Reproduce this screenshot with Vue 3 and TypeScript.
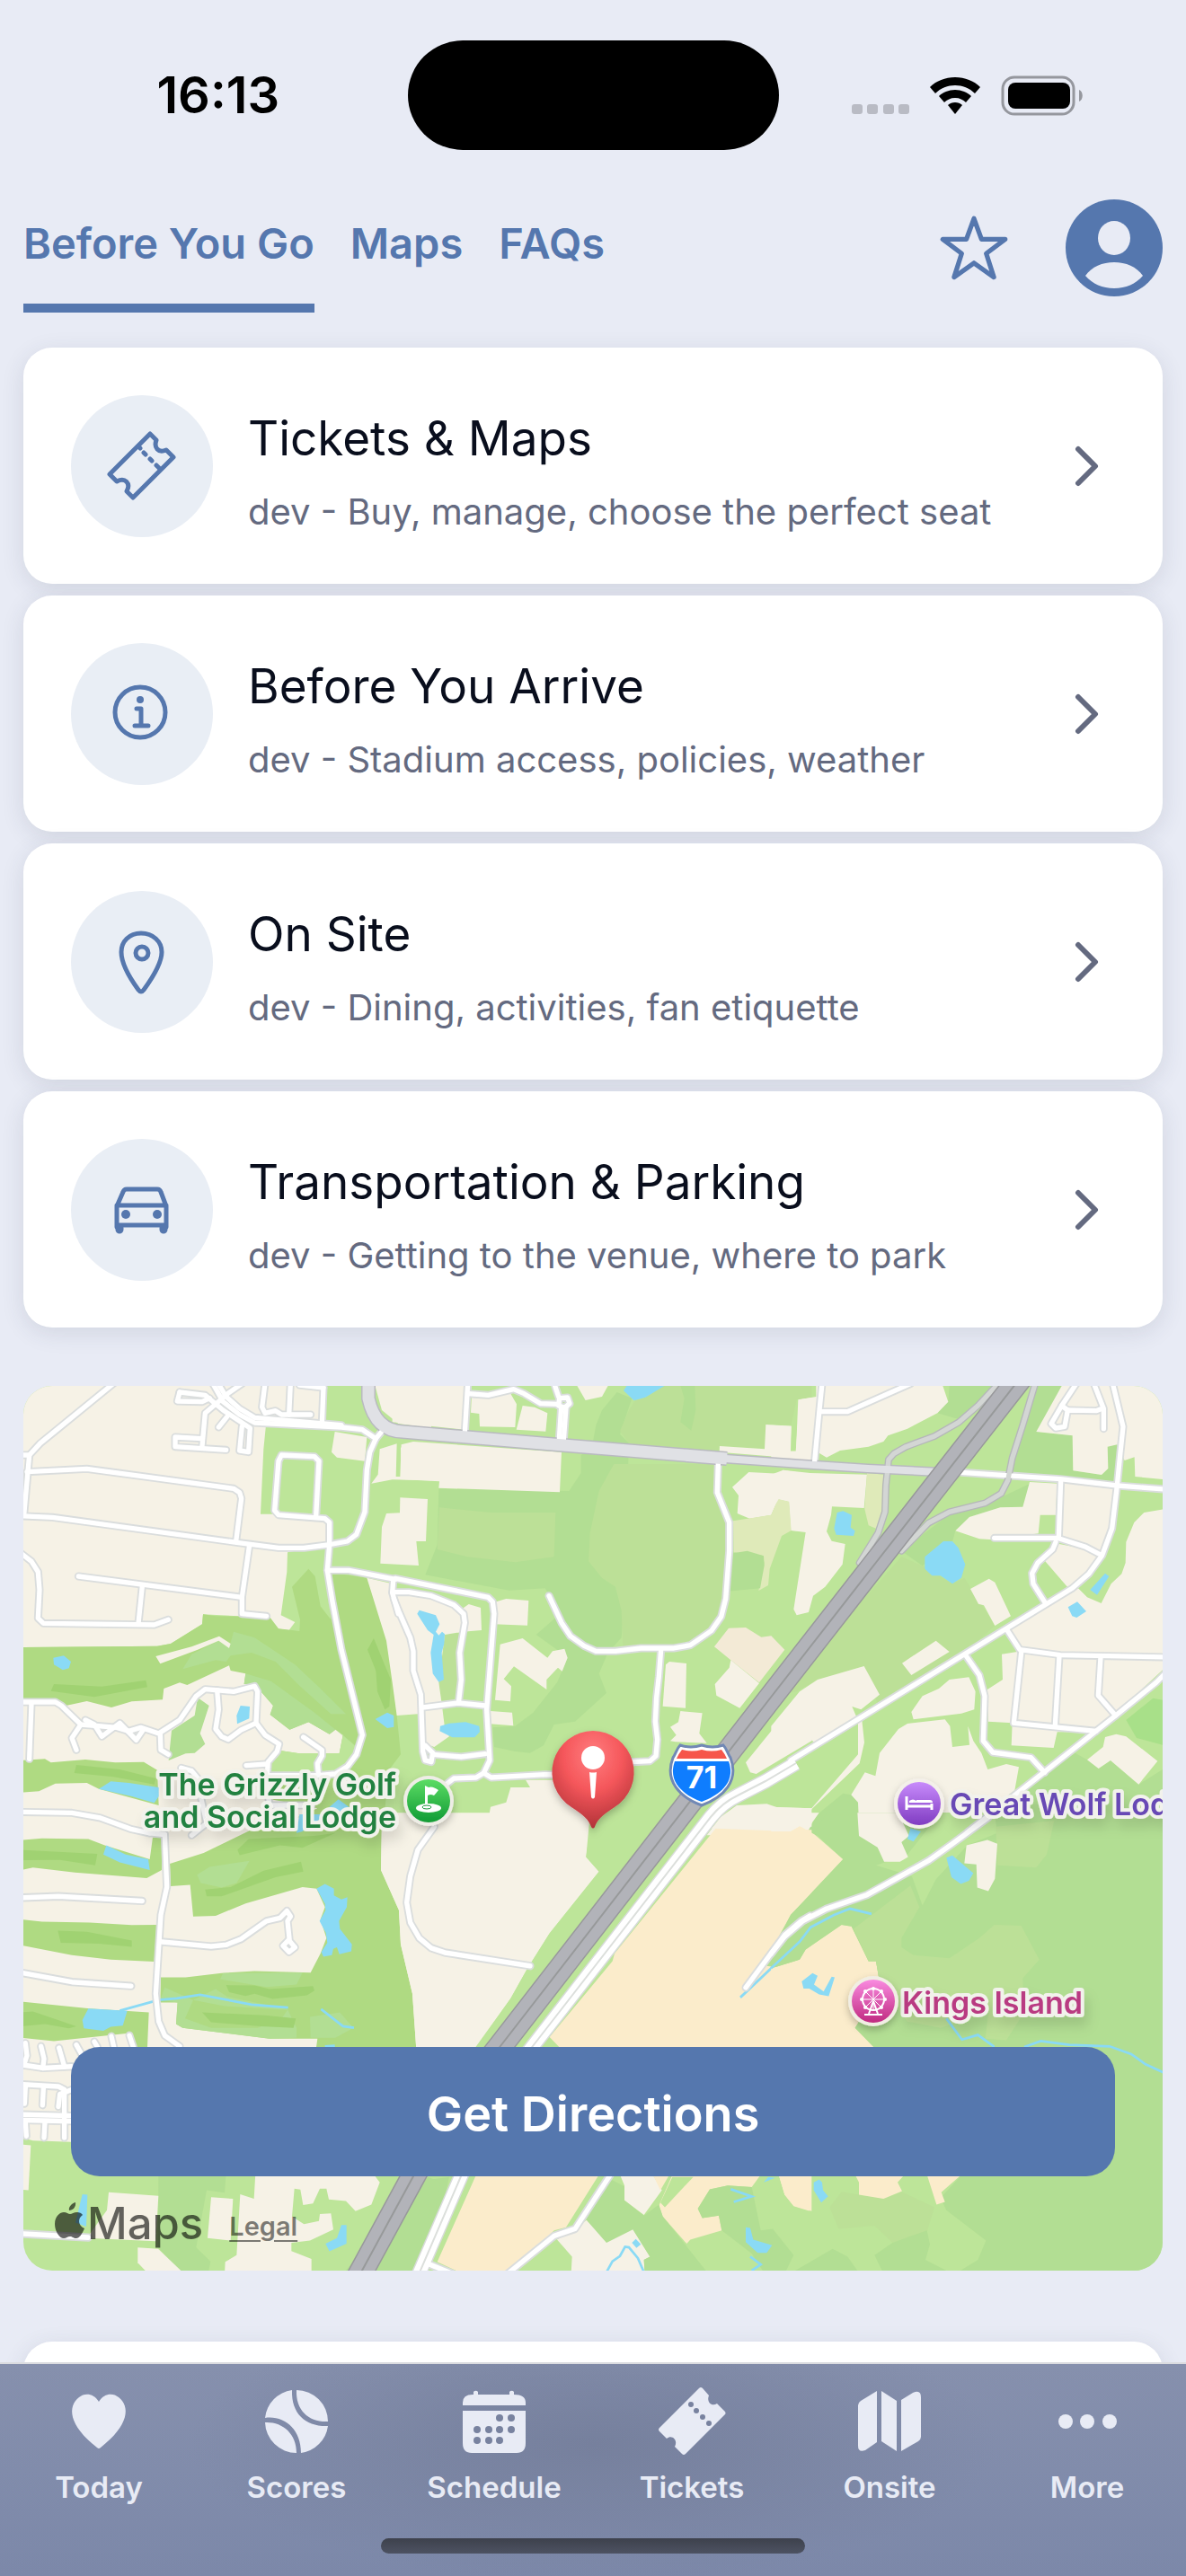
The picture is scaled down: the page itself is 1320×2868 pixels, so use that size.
<script setup lang="ts">
import { ref } from 'vue'

type Shape = [kind: string, points: string]

interface Tile {
  id: string
  transform: string
  areas: Shape[]
  streams: string[]
  ramps: string[]
  roads: string[]
}

const tabs = ['Before You Go', 'Maps', 'FAQs']
const activeTab = ref('Before You Go')

const guides = [
  { icon: 'ticket', title: 'Tickets & Maps', text: 'dev - Buy, manage, choose the perfect seat' },
  { icon: 'info', title: 'Before You Arrive', text: 'dev - Stadium access, policies, weather' },
  { icon: 'pin', title: 'On Site', text: 'dev - Dining, activities, fan etiquette' },
  { icon: 'car', title: 'Transportation & Parking', text: 'dev - Getting to the venue, where to park' },
]

const navItems = ['Today', 'Scores', 'Schedule', 'Tickets', 'Onsite', 'More']

// The map is drawn in six tiles, each with its own coordinate grid.
const tiles: Tile[] = [
  {
    id: 'nw',
    transform: 'translate(-26 -23) scale(.33333)',
    areas: [
      ['cream', '70,60 1085,60 1080,195 888,200 880,280 870,497 915,497 1090,515 1100,600 960,625 958,690 938,835 985,858 965,885 925,880 900,850 800,838 678,832 675,865 570,930 525,938 70,942'],
      ['golf', '70,942 525,938 570,930 675,865 678,832 720,838 900,840 930,880 1000,888 1002,850 975,740 1030,680 1052,705 1070,805 1105,850 1090,690 1225,710 1295,920 1312,1060 1325,1170 1338,1300 1300,1350 1275,1570 70,1570'],
      ['cream', '70,1115 180,1115 220,1137 290,1122 372,1143 440,1123 543,1117 547,1080 600,1060 625,1068 765,1003 770,1020 820,1030 815,1065 850,1065 912,1137 902,1167 967,1217 1030,1192 1100,1232 1120,1217 1145,1235 1133,1297 1000,1297 935,1287 900,1330 905,1450 1060,1480 860,1570 70,1570'],
      ['green', '935,1287 1000,1297 1133,1297 1145,1235 1185,1270 1210,1280 1160,1340 1060,1380 905,1385 900,1330'],
      ['golf', '70,1320 150,1315 170,1327 285,1317 385,1327 480,1325 525,1352 530,1470 330,1415 290,1395 185,1397 130,1423 70,1427'],
      ['dark', '255,1335 400,1350 520,1380 515,1400 380,1375 248,1362'],
      ['dark', '180,1065 340,1073 487,1052 492,1075 315,1108 170,1088'],
      ['dark', '1248,912 1280,990 1305,1050 1300,1140 1285,1150 1260,1090 1255,1020 1227,950'],
      ['forest', '610,1015 640,965 730,920 765,945 780,890 850,910 985,1000 1070,1080 1155,1165 1105,1165 1000,1070 920,990 840,960 770,970 755,990 720,985'],
      ['forest', '820,1030 905,1055 1050,1160 1185,1270 1145,1235 1120,1217 1100,1232 1030,1192 967,1217 902,1167 912,1137 850,1065 815,1065'],
      ['forest', '660,1110 698,1137 668,1230 685,1265 650,1295 620,1297 563,1320 573,1220 650,1170'],
      ['cream', '520,972 640,940 732,905 770,930 765,945 730,920 660,950 535,997'],
      ['cream', '1118,222 1225,240 1218,320 1125,308 1107,290'],
      ['cream', '1240,395 1262,365 1268,280 1325,262 1322,372 1340,372 1338,275 1390,262 1440,265 1440,385 1310,382'],
      ['cream', '1250,60 1440,60 1440,210 1330,195 1275,150'],
      ['water', '178,977 213,970 237,990 230,1012 210,1018 180,1000'],
      ['water', '803,1137 834,1140 832,1180 792,1198 790,1170'],
      ['water', '1253,1182 1293,1160 1315,1170 1315,1208 1293,1212'],
      ['water', '330,1415 370,1390 430,1395 530,1410 530,1440 515,1462 440,1440'],
      ['water', '1060,1510 1130,1450 1165,1475 1000,1560 990,1560'],
    ],
    streams: [],
    ramps: [],
    roads: [
      '380,60 135,260 98,300 80,500', '60,300 98,300', '90,356 290,346 780,412 800,425 806,445 788,588',
      '60,503 175,508 790,592 930,610 1015,610 1095,600 1160,588 1190,565 1218,490 1225,350 1235,290 1255,245 1280,215',
      '1255,245 1210,215 1140,207 850,192 800,165 745,122 710,60', '1140,200 850,175 800,145 755,105 728,60',
      '600,90 685,100 745,150 835,210 830,290 800,285 808,205', '600,90 592,120 675,122 700,110',
      '675,270 685,160 720,130 760,95 810,60', '755,283 585,272 585,240 675,245', '730,207 758,172',
      '885,60 875,140 885,160 920,152 940,165 1037,165', '970,60 965,165', '1080,75 1075,195', '1000,66 1080,75',
      '1055,505 1065,320 1050,305 940,300 930,320 917,485 930,500 1085,512 1100,525 1100,600 1093,685 1110,790 1140,950 1210,1235 1190,1300 1160,1340 1120,1365 1060,1370 900,1370',
      '1093,685 1165,685 1320,715', '262,705 808,775', '833,600 808,775 808,830 890,838', '475,738 462,862',
      '60,620 105,655 127,690 132,750 127,845 145,862 515,867 562,850',
      '60,1125 185,1125 205,1137 270,1200 390,1210 430,1222 470,1210 530,1230 600,1185 655,1105 685,1082 780,1090 850,1072 860,1090 855,1195 885,1235 932,1265 925,1290 895,1325 890,1400 900,1470 1040,1470',
      '105,1130 98,1315', '270,1200 240,1245 255,1285', '285,1185 315,1200 340,1240 400,1195 455,1252 480,1215',
      '535,1230 537,1285 562,1300', '725,1085 730,1150 720,1215 740,1240 762,1250 805,1218 855,1195',
      '1013,1242 1075,1285 1075,1305 1060,1330 1063,1365', '822,1337 890,1332',
      '605,1345 640,1355 665,1385 670,1440 690,1530 640,1570', '60,1492 240,1495 335,1512 440,1550 500,1563',
      '1313,720 1310,760 1330,830',
    ],
  },
  {
    id: 'n',
    transform: 'translate(414 -23) scale(.33333)',
    areas: [
      ['forest', '740,90 690,150 670,200 655,280 620,300 620,360 580,420 145,412 140,600 100,700 380,752 500,745 550,830 470,900 540,950 575,977 540,1060 460,1160 400,1205 325,1210 330,1275 400,1290 450,1295 495,1270 530,1200 600,1190 705,1095 680,1030 710,960 755,910 760,840 780,260 750,230 790,110'],
      ['olive', '147,475 320,492 535,492 530,640 400,658 240,640 140,615'],
      ['olive', '680,420 730,330 1075,330 1075,425 1115,520 1105,800 1050,890 980,935 760,940 755,820 735,740 690,710 645,655 650,560'],
      ['olive', '800,118 835,107 900,60 1390,60 1390,110 1340,115 1322,200 1237,198 1233,278 1080,270 1080,290 780,260 750,220 780,150'],
      ['forest', '952,69 1000,69 1003,150 988,218 952,190 965,110'],
      ['olive', '167,900 225,892 215,960 220,1050 212,1128 155,1130 145,1060'],
      ['cream', '-10,60 242,60 230,215 -10,190'],
      ['cream', '255,100 385,95 405,130 400,207 282,205 280,162 252,158'],
      ['cream', '425,135 465,140 508,160 502,221 404,215'],
      ['cream', '605,65 712,65 690,105 635,117'],
      ['cream', '20,265 60,255 555,290 549,424 145,410 147,388 0,380 0,372 16,372'],
      ['cream', '16,442 108,447 102,588 70,588 78,669 -50,662 -45,540 -30,495 15,493'],
      ['cream', '337,790 370,780 445,786 441,869 330,865'],
      ['cream', '350,932 425,912 508,977 525,955 565,947 575,977 557,1022 543,1010 505,1050 505,1083 396,1006 362,1048 387,1072 384,1123 333,1118'],
      ['cream', '318,1155 390,1160 394,1204 315,1198'],
      ['cream', '0,750 120,775 200,805 225,840 228,890 165,900 145,1060 155,1130 165,1210 180,1240 130,1275 90,1260 75,1165 5,1170 -10,1060 -30,920 -95,710 -10,730'],
      ['cream', '228,810 245,798 285,810 288,885 225,890'],
      ['cream', '903,1000 915,990 972,996 969,1145 893,1139'],
      ['cream', '952,1155 1025,1162 1015,1230 1040,1262 935,1258 918,1255 938,1235 918,1208 945,1192'],
      ['cream', '1125,407 1180,357 1280,362 1295,350 1390,365 1390,555 1322,552 1315,455 1278,447 1255,500 1183,512 1142,495 1146,435'],
      ['cream', '1237,198 1322,203 1318,287 1338,287 1345,115 1390,108 1390,315 1082,290 1083,270 1233,280'],
      ['peach', '1065,940 1113,878 1170,876 1222,908 1255,904 1300,950 1215,1060 1120,985'],
      ['cream', '1120,985 1215,1062 1150,1145 1072,1103 1067,1065 1115,1010'],
      ['cream', '1170,1327 1370,1080 1390,1065 1390,1255 1205,1365 1185,1360'],
      ['cream', '385,1410 450,1410 435,1385 560,1385 640,1480 660,1500 650,1570 -50,1570 -45,1500 190,1500 310,1520 318,1475 370,1460'],
      ['cream', '1085,1510 1140,1470 1240,1465 1275,1477 1390,1480 1390,1570 1040,1570'],
      ['yellow', '1278,447 1315,455 1322,552 1290,570 1250,680 1245,735 1213,753 1232,660 1225,635 1130,625 1128,520 1255,500'],
      ['forest', '1128,628 1175,620 1230,637 1232,670 1218,745 1110,755'],
      ['water', '762,85 775,65 905,65 835,107 797,118'],
      ['water', '80,818 135,835 148,865 135,890 145,902 156,890 165,898 163,930 155,960 162,1050 145,1058 125,1030 118,960 128,900 108,885 73,830'],
      ['water', '150,1205 180,1196 235,1192 280,1205 282,1225 265,1243 190,1243 148,1222'],
    ],
    streams: [],
    ramps: [],
    roads: [
      '242,60 232,225', '245,95 310,100 395,80 430,95 485,128 545,130', '530,60 545,105', '548,110 575,108 582,128 565,142 545,135 548,110',
      '554,140 547,250', '570,140 562,250',
      '1078,325 1075,425 1115,525 1115,620 1103,780 1088,840 1055,887 985,935 930,945 820,945 735,955 670,955 630,937 585,905 555,860 513,770',
      '887,950 880,1040 872,1110 868,1190 875,1250 870,1305 850,1322 790,1325',
      '540,1368 500,1367 320,1377 295,1362 270,1377 195,1380 170,1400 130,1500',
      '295,1362 315,1320 305,1150 330,830 325,790 310,775 0,712',
      '-10,758 45,758 120,770 195,800 228,830 232,860 215,960 220,1050 212,1120',
      '-5,780 15,830 50,910 60,955 60,1020 85,1100 92,1290 100,1320 120,1325 125,1295 100,1270',
      '92,1143 210,1128 300,1137', '125,1300 220,1308 300,1298',
    ],
  },
  {
    id: 'ne',
    transform: 'translate(834 -23) scale(.33333)',
    areas: [
      ['olive', '430,640 500,670 600,730 640,710 742,870 640,960 350,1130 305,1005 150,1050 80,1090 20,1100'],
      ['forest', '430,620 600,490 700,470 860,395 855,420 835,473 760,475 657,507 610,553 600,590 500,670'],
      ['forest', '750,65 590,65 586,122 550,160 620,180 700,120'],
      ['forest', '880,60 980,60 880,222 1001,235 1003,352 1098,366 1120,345 1118,272 1160,262 1150,395 790,370 800,310'],
      ['forest', '900,1370 1010,1295 1050,1318 1088,1347 1128,1320 1222,1400 1302,1350 1310,1570 640,1570'],
      ['bright', '1180,1185 1270,1112 1310,1120 1310,1270 1215,1245'],
      ['forest', '235,1430 262,1435 285,1460 290,1570 110,1570 150,1500'],
      ['cream', '165,60 565,60 586,122 550,160 450,212 385,235 370,255 320,272 225,285 180,308 150,290'],
      ['cream', '90,115 145,105 145,60 165,60 140,320 -5,310 -5,200 62,203 60,287 77,287'],
      ['cream', '970,60 1310,60 1310,382 1210,372 1208,307 1175,318 1150,265 1118,272 1120,345 1098,366 1003,352 1001,235 880,222'],
      ['cream', '-5,365 35,350 125,360 315,365 305,477 198,472 195,500 180,555 197,587 242,597 233,665 175,740 135,770 120,825 80,835 70,815 110,558 62,552 55,455 20,447 -5,490'],
      ['cream', '858,390 950,395 945,500 893,500 887,562 735,583 690,580 610,553 657,507 760,475 835,473'],
      ['cream', '965,390 1145,405 1135,545 1095,635 950,575'],
      ['cream', '910,655 945,595 1050,615 1090,640 1050,700 985,742'],
      ['cream', '1310,480 1240,492 1207,525 1180,590 1178,660 1165,697 1130,730 1097,795 1050,775 1020,745 780,885 830,955 765,965 768,1050 717,1083 720,1190 800,1195 797,1270 938,1278 950,1225 1080,1225 1310,1010'],
      ['cream', '660,747 722,713 742,725 795,838 742,870 705,802 687,797'],
      ['cream', '432,995 545,920 590,957 463,1035'],
      ['cream', '-5,1205 90,1090 150,1050 305,1005 357,1100 295,1150 265,1140 280,1175 140,1260 110,1238 115,1260 -5,1325'],
      ['cream', '463,1158 500,1105 555,1080 590,1050 655,1042 677,1090 673,1150 630,1163 470,1183'],
      ['cream', '290,1570 285,1460 262,1435 308,1360 343,1372 357,1295 420,1215 450,1197 575,1183 592,1205 600,1275 657,1268 652,1205 670,1255 697,1295 718,1350 780,1332 822,1342 808,1420 700,1500 640,1550 460,1570'],
      ['cream', '285,1185 298,1185 306,1260 290,1330 130,1483 110,1570 -5,1570 -5,1475 130,1480 285,1300'],
      ['cream', '1050,1318 1103,1275 1110,1242 1147,1232 1180,1240 1285,1322 1222,1400 1128,1320 1088,1347'],
      ['yellow', '315,360 370,365 365,520 345,545 320,535 307,480'],
      ['water', '215,492 235,487 264,500 260,542 275,553 270,570 212,566 205,545'],
      ['water', '508,640 570,588 600,588 620,610 643,665 630,710 600,730 560,703 532,703 508,680'],
      ['water', '1060,750 1110,695 1123,705 1083,767'],
      ['water', '986,808 1017,790 1047,822 1015,843 1000,838'],
    ],
    streams: [],
    ramps: [
      '755,60 685,135 622,190 540,237 445,272 405,295 387,315 378,400 375,490 352,560 290,660',
      '877,60 835,200 800,310 785,385 763,428 710,460 590,490 520,527 430,620',
    ],
    roads: [
      '165,60 155,160 140,320', '160,155 250,155 460,62', '630,358 960,380 1150,402 1320,415',
      '1015,60 965,135 930,195 945,210 975,205 985,150 1080,152 1100,145', '965,135 985,150', '1072,60 1105,145 1105,212',
      '1135,60 1170,205 1160,300 1150,402 1133,545 1100,635 1055,697 1000,745 640,965 60,1320',
      '962,385 955,575', '740,577 950,577 1045,607 1095,633', '945,590 935,615 885,660 866,695 870,730 912,797',
      '783,885 825,950 960,968 1320,975', '830,960 805,1195 1080,1222', '957,970 943,1205', '1095,975 1087,1103 1145,1170',
      '1320,1020 1280,1060 1145,1170 905,1360 650,1560', '645,970 690,1035 708,1105 703,1255 735,1293 862,1310 908,1360',
    ],
  },
  {
    id: 'sw',
    transform: 'translate(-26 477) scale(.33333 .34439)',
    areas: [
      ['cream', '70,30 1440,0 1440,1000 260,1060 110,1055 70,1045'],
      ['golf', '567,160 680,125 860,40 1275,40 1272,180 1332,310 1338,420 1377,580 1390,760 1055,760 1060,725 900,725 610,690 588,678 593,608 535,608 537,527 620,527 740,513 850,507 1037,512 1070,450 1090,400 1070,340 1085,300 1057,240 1010,235 820,288 720,328 645,330 635,228 570,232'],
      ['golf', '70,83 140,78 295,80 350,100 500,145 510,75 540,72 540,180 490,206 250,188 110,172 70,180'],
      ['golf', '70,340 140,347 300,350 440,358 523,357 515,476 370,470 240,455 70,423'],
      ['golf', '70,605 300,628 497,640 492,752 455,752 435,707 180,733 70,722'],
      ['dark', '70,115 325,128 318,165 200,147 70,148'],
      ['dark', '193,376 290,380 440,408 440,428 330,418 203,415'],
      ['dark', '70,640 110,637 255,685 230,692 150,678 70,685'],
      ['dark', '793,115 830,80 1050,70 1120,60 1010,108 935,100 800,132'],
      ['dark', '685,243 770,235 880,182 1005,153 1013,185 920,203 740,265 690,265'],
      ['forest', '535,600 550,560 645,600 720,565 760,590 960,630 990,690 990,722 900,725 610,690 588,678 593,608'],
      ['golf', '645,600 750,620 960,632 940,660 860,690 705,690 618,660'],
      ['dark', '755,552 850,553 900,565 1045,555 1050,570 1025,585 910,597 850,580 820,587 765,575'],
      ['dark', '675,640 885,650 988,660 980,690 870,685 705,672'],
      ['forest', '658,195 700,170 833,150 790,222 740,237 670,222'],
      ['forest', '735,533 745,513 1010,512 990,550 890,558'],
      ['forest', '1035,655 1135,640 1180,690 1120,722 1037,722'],
      ['water', '345,130 355,100 420,130 495,145 500,180 400,155'],
      ['water', '1057,240 1085,225 1115,240 1115,262 1140,275 1160,268 1158,300 1132,345 1135,370 1175,420 1173,443 1133,452 1125,430 1113,435 1108,455 1080,460 1073,445 1093,415 1088,383 1067,345 1087,310 1085,290'],
      ['water', '295,628 425,635 410,683 370,687 345,700 280,692 275,665'],
      ['water', '990,60 1000,0 1090,0 1010,55'],
      ['cream', '70,1067 103,1070 95,1215 70,1213'],
      ['forest', '529,1160 755,1160 750,1223 690,1215 655,1400 703,1445 695,1485 605,1485 528,1400'],
      ['cream', '363,1222 529,1233 520,1380 290,1370 357,1280'],
      ['cream', '705,1238 778,1243 770,1378 693,1370'],
      ['cream', '853,1160 1245,1160 1268,1190 1240,1262 1187,1283 1155,1250 1098,1245 1090,1210 1068,1210 1045,1258 1012,1263 1003,1213 983,1210 975,1300 1015,1325 1065,1315 1068,1292 1105,1290 1113,1342 1035,1378 973,1385 973,1412 1040,1437 1040,1485 750,1485 752,1447 790,1425 802,1228 848,1243'],
      ['cream', '460,1400 528,1405 615,1485 495,1485 460,1450'],
      ['forest', '1250,1490 1440,1180 1500,1172 1470,1300 1390,1490'],
      ['water', '275,1228 292,1230 288,1333 252,1320 262,1280'],
      ['water', '1087,1388 1125,1370 1140,1328 1157,1328 1157,1388 1100,1413'],
    ],
    streams: ['400,635 530,600 590,595 668,583 840,615 962,625', '1072,630 1145,685 1182,690', '1085,750 1118,748'],
    ramps: [],
    roads: [
      '500,60 550,65', '550,65 557,235 537,325 520,580 530,670 550,715 600,750',
      '540,412 705,427 755,422 805,403 890,345 935,335 958,312 970,330 960,345 967,410 985,430 965,445 945,425 965,405',
      '60,270 195,265 475,280', '60,510 240,542 438,555', '60,808 145,820 240,815',
      '85,740 90,780 80,810', '137,750 147,790 143,820', '197,755 215,815', '255,745 275,780', '315,735 325,752', '372,718 380,752', '432,715 445,752',
      '60,872 195,880 215,890 215,1045', '85,880 82,935', '145,885 142,940', '195,945 200,905 240,890', '60,970 260,975', '60,988 240,992', '85,995 88,1040', '150,995 147,1045',
      '60,1355 295,1368',
    ],
  },
  {
    id: 's',
    transform: 'translate(414 477) scale(.33333 .34439)',
    areas: [
      ['cream', '650,-5 650,50 637,138 680,185 515,385 440,500 385,595 265,760 70,760 57,580 18,420 12,310 -48,180 -45,-5'],
      ['green', '650,0 900,0 980,100 440,790 240,790 385,595 440,500 515,385 680,185 637,138'],
      ['sand', '1070,45 1390,50 1390,760 555,760 515,720 725,475 732,450'],
      ['cream', '1055,45 1110,-5 1390,-5 1390,40 1345,38 1315,55'],
      ['forest', '1390,255 1318,325 1280,410 1240,490 1290,497 1350,470 1390,425'],
      ['forest', '-180,1490 110,1172 150,1190 130,1300 60,1490'],
      ['sand', '270,1165 680,1165 570,1335 530,1345 385,1485 225,1485 140,1447'],
      ['cream', '640,1310 705,1383 793,1340 850,1430 830,1440 833,1485 587,1485 590,1430 540,1375 600,1340'],
      ['cream', '750,1165 860,1165 890,1215 830,1295 765,1248 765,1200'],
      ['sand', '925,1165 1220,1165 1190,1205 1110,1200 1050,1212 1010,1275 1025,1305 1080,1297 1090,1345 985,1375 973,1388 893,1300 880,1265'],
      ['sand', '860,1165 915,1165 885,1215'],
      ['green', '885,1255 925,1172 995,1172 900,1270'],
      ['sand', '1280,1165 1390,1165 1390,1283 1330,1265 1300,1230'],
      ['forest', '720,1180 765,1203 765,1248 830,1297 880,1262 893,1300 1045,1485 833,1485 830,1440 850,1430 793,1342 705,1385 637,1310'],
      ['forest', '1110,1200 1190,1205 1220,1345 1260,1340 1330,1425 1300,1485 1230,1480 1190,1420 1090,1345 1080,1297 1025,1305 1010,1275 1050,1212'],
      ['water', '1170,1335 1185,1337 1195,1375 1258,1393 1240,1418 1210,1418 1170,1383'],
      ['water', '790,1385 803,1373 820,1390 805,1402'],
      ['water', '1230,1190 1245,1172 1268,1175'],
    ],
    streams: ['705,1480 725,1445 750,1428 767,1398 780,1400 810,1435 830,1480', '1120,1212 1190,1235 1130,1253', '1185,1430 1220,1455 1190,1475', '1152,592 1345,415 1380,375'],
    ramps: [],
    roads: [
      '130,40 75,115 50,200 38,285 50,350 80,400 120,432 165,447 450,490',
      '1385,328 1355,345 1300,390 1170,560', '718,1165 600,1340 530,1363 375,1485', '95,1447 190,1485',
    ],
  },
  {
    id: 'se',
    transform: 'translate(834 477) scale(.33333 .34439)',
    areas: [
      ['sand', '-5,55 60,55 90,38 140,65 235,145 60,325 20,400 -5,440'],
      ['sand', '-5,498 90,470 110,437 230,357 263,362 320,475 345,475 360,560 275,690 345,760 -5,760'],
      ['forest', '140,60 180,-5 1310,-5 1310,1485 610,1485 685,1440 712,1378 580,1280 560,1240 625,1172 345,760 275,690 360,560 345,475 320,475 263,362 230,357 110,437 90,470 -5,498 -5,440 60,325 235,145'],
      ['green', '345,165 465,200 500,295 545,210 650,100 750,60 740,-5 560,-5 450,130'],
      ['olive', '270,370 460,230 490,300 430,400 430,430 470,455 590,465 690,400 740,357 830,360 890,470 835,530 840,640 780,730 710,725 720,640 560,690 450,670 360,560 345,475 320,475'],
      ['olive', '745,40 940,20 915,130 880,172 750,165'],
      ['olive', '190,1270 230,1220 370,1243 430,1220 540,1270 515,1350 400,1385 340,1330 220,1340'],
      ['forest', '340,1425 400,1385 515,1345 525,1390 510,1440 600,1485 370,1485'],
      ['forest', '75,1475 200,1405 250,1430 290,1485 60,1485'],
      ['cream', '-5,-5 155,-5 118,45 90,38 60,55 -5,55'],
      ['cream', '283,-5 420,-5 455,70 430,90 452,138 425,153 372,153 350,107 288,70'],
      ['cream', '647,100 717,83 750,95 742,208 720,248 683,237 680,162 640,158'],
      ['water', '580,140 600,133 670,190 655,215 628,225 597,203'],
      ['water', '450,80 460,45 495,55 470,88'],
      ['water', '97,540 133,513 150,522 138,550 170,573 197,525 207,527 187,588 155,582 122,563 103,563'],
      ['sand', '20,1165 108,1165 122,1282 70,1267 40,1230'],
      ['sand', '275,1165 440,1165 417,1190 432,1218 370,1243 288,1230 288,1190'],
      ['sand', '515,1165 630,1165 563,1222 575,1253 547,1262'],
      ['water', '137,1190 155,1180 165,1190 168,1215 185,1235 162,1255 137,1215'],
    ],
    streams: ['-5,497 90,412 127,365 205,325 258,305 330,322', '580,660 632,728 685,713 740,752', '840,752 895,733 990,745 1125,750 1197,775 1245,808 1310,837'],
    ramps: [],
    roads: ['720,10 600,95 520,150 315,260 180,305 100,345 40,395 -5,450'],
  },
]

const highway = 'M1112 -12 L951 194 L834 344 L531 735 Q470 812 434 880 L372 994'
const frontage = 'M860 420 L826 440 L795 456 Q778 464 765 480 L567 735 Q520 795 487 880 L438 994'
const arterial = 'M384 -10 V14 Q392 50 422 51 L601 66 L783 81'
const arterialEast = 'M781 81 L880 88 L940 92 L1020 96'
</script>

<template>
  <div class="screen">
    <header class="status">
      <div class="status-side"><time class="clock">16:13</time></div>
      <div class="island"></div>
      <div class="status-side">
        <svg class="signals" viewBox="0 0 260 48" aria-hidden="true">
          <g fill="#b9bbc4">
            <rect x="0" y="34" width="12" height="11" rx="3" /><rect x="17" y="34" width="12" height="11" rx="3" />
            <rect x="35" y="34" width="12" height="11" rx="3" /><rect x="52" y="34" width="12" height="11" rx="3" />
          </g>
          <path d="M115 4c11 0 21 4 28 11l-6 7c-6-6-14-9-22-9s-16 3-22 9l-6-7c7-7 17-11 28-11z" />
          <path d="M115 18c7 0 14 3 18 7l-6 7c-3-3-7-5-12-5s-9 2-12 5l-6-7c4-4 11-7 18-7z" />
          <path d="M115 32c3 0 6 1 8 3l-8 10-8-10c2-2 5-3 8-3z" />
          <rect x="168" y="4" width="79" height="41" rx="13" fill="none" stroke="#95979e" stroke-width="3" />
          <rect x="174" y="10" width="69" height="29" rx="8" />
          <path d="M253 18c5 2 5 11 0 13z" fill="#95979e" />
        </svg>
      </div>
    </header>

    <div class="topbar">
      <nav class="tabs" aria-label="Sections">
        <button
          v-for="tab in tabs"
          :key="tab"
          type="button"
          class="tab"
          :class="{ active: tab === activeTab }"
          @click="activeTab = tab"
        >{{ tab }}</button>
      </nav>
      <button class="icon-button star" type="button" aria-label="Favorites">
        <svg viewBox="0 0 76 74"><path d="M38 6 L46 28 L71 28 L51 43 L59 68 L38 53 L17 68 L25 43 L5 28 L30 28 Z" fill="none" stroke="currentColor" stroke-width="5" stroke-linejoin="round" /></svg>
      </button>
      <button class="icon-button avatar" type="button" aria-label="Profile">
        <svg viewBox="0 0 108 108">
          <circle cx="54" cy="54" r="54" fill="currentColor" />
          <ellipse cx="54" cy="43" rx="18" ry="19" fill="#e8ebf5" />
          <path d="M22 85c7-10 19-15 32-15s25 5 32 15c-8 9-19 14-32 14s-24-5-32-14z" fill="#e8ebf5" />
        </svg>
      </button>
    </div>

    <main class="content">
      <ul class="guides">
        <li v-for="guide in guides" :key="guide.title">
          <a class="card" href="#">
            <svg class="guide-icon" viewBox="0 0 158 158" aria-hidden="true">
              <g v-if="guide.icon === 'ticket'">
                <path d="M88 43 L95 50 C92 58 97 65 106 61 L114 69 L69 114 L62 107 C67 98 60 91 51 96 L43 88 Z" />
                <path d="M75 57 L77 59 M81 64 L83 66 M88 71 L90 73 M95 78 L98 81" />
              </g>
              <g v-else-if="guide.icon === 'info'">
                <circle cx="77" cy="77" r="28" /><circle cx="77" cy="63" r="4" class="solid" />
                <path d="M73 73 H78 V91 M71 92 H86" />
              </g>
              <g v-else-if="guide.icon === 'pin'">
                <path d="M78 47c-13 0-22 9-22 21 0 13 11 31 19 42q3 4 6 0c8-11 20-29 20-42 0-12-10-21-23-21z" />
                <circle cx="79" cy="69" r="7" />
              </g>
              <g v-else>
                <path d="M51 98 V75 L58 59 Q59 56 62 56 H96 Q99 56 100 59 L106 75 V98 M51 74 H106 M51 96 H106" />
                <path d="M54 99 V101 M103 99 V101" stroke-width="9" /><circle cx="61" cy="84" r="5" class="solid" /><circle cx="96" cy="84" r="5" class="solid" />
              </g>
            </svg>
            <span class="card-text">
              <span class="card-title">{{ guide.title }}</span>
              <span class="card-sub">{{ guide.text }}</span>
            </span>
            <svg class="chevron" viewBox="0 0 28 46" aria-hidden="true"><path d="M4 4 L23 23 L4 42" /></svg>
          </a>
        </li>
      </ul>

      <section class="map" aria-label="Venue map">
        <svg class="map-art" viewBox="0 0 1268 985" preserveAspectRatio="xMidYMid slice">
          <defs>
            <linearGradient id="golfFill" x1="0" y1="0" x2="0" y2="1"><stop stop-color="#5cdc64" /><stop offset="1" stop-color="#109b35" /></linearGradient>
            <linearGradient id="hotelFill" x1="0" y1="0" x2="0" y2="1"><stop stop-color="#c88bfb" /><stop offset="1" stop-color="#803cc2" /></linearGradient>
            <linearGradient id="parkFill" x1="0" y1="0" x2="0" y2="1"><stop stop-color="#f98be0" /><stop offset="1" stop-color="#c02a80" /></linearGradient>
            <radialGradient id="pinFill" cx=".5" cy=".25" r=".8"><stop stop-color="#ff7d7f" /><stop offset=".45" stop-color="#f5575b" /><stop offset="1" stop-color="#a92d34" /></radialGradient>
            <filter id="drop" x="-30%" y="-30%" width="160%" height="170%"><feDropShadow dx="0" dy="4" stdDeviation="4" flood-opacity=".25" /></filter>
            <filter id="labelDrop" x="-10%" y="-10%" width="120%" height="140%"><feDropShadow dx="4" dy="10" stdDeviation="7" flood-opacity=".12" /></filter>
          </defs>
          <rect width="1268" height="985" fill="#bde599" />
          <g v-for="tile in tiles" :key="tile.id + '-areas'" :transform="tile.transform">
            <polygon v-for="(area, i) in tile.areas" :key="i" :class="area[0]" :points="area[1]" />
            <polyline v-for="line in tile.streams" :key="line" class="stream" :points="line" />
          </g>
          <g v-for="tile in tiles" :key="tile.id + '-casing'" :transform="tile.transform">
            <polyline v-for="line in tile.roads" :key="line" class="road-casing" :points="line" />
            <polyline v-for="line in tile.ramps" :key="line" class="ramp-casing" :points="line" />
          </g>
          <g fill="none">
            <path :d="frontage" stroke="#d8dbda" stroke-width="17" />
            <path :d="arterial" stroke="#b9bac0" stroke-width="16" />
            <path :d="arterialEast" stroke="#b9bac0" stroke-width="11" />
          </g>
          <g v-for="tile in tiles" :key="tile.id + '-roads'" :transform="tile.transform">
            <polyline v-for="line in tile.roads" :key="line" class="road" :points="line" />
            <polyline v-for="line in tile.ramps" :key="line" class="ramp" :points="line" />
          </g>
          <g fill="none">
            <path :d="frontage" stroke="#fff" stroke-width="14" />
            <path :d="frontage" stroke="#dcdfdc" stroke-width="2" />
            <path :d="arterial" stroke="#e0e1e5" stroke-width="13" />
            <path :d="arterialEast" stroke="#e0e1e5" stroke-width="8" />
            <path :d="highway" stroke="#98989b" stroke-width="28" />
            <path :d="highway" stroke="#b2b3b9" stroke-width="25" />
            <path :d="highway" stroke="#97999a" stroke-width="2" />
          </g>

          <g transform="translate(755 434)">
            <path d="M-24 -34 Q-12 -30 0 -34 Q12 -30 24 -34 C28 -30 29 -24 32 -20 C42 6 24 24 0 33 C-24 24 -42 6 -32 -20 C-29 -24 -28 -30 -24 -34 Z" fill="#fff" stroke="#7188b5" stroke-width="3" />
            <path d="M-22 -29 Q-11 -26 0 -29 Q11 -26 22 -29 Q26 -24 28 -19 H-28 Q-26 -24 -22 -29 Z" fill="#f6564b" />
            <path d="M-30 -16 H30 C38 6 22 21 0 29 C-22 21 -38 6 -30 -16 Z" fill="#0f7dfe" />
            <text class="route" x="0" y="14" text-anchor="middle">71</text>
          </g>

          <g filter="url(#labelDrop)">
            <text class="place golf-name" x="415" y="456" text-anchor="end">The Grizzly Golf</text>
            <text class="place golf-name" x="415" y="492" text-anchor="end">and Social Lodge</text>
            <text class="place hotel-name" x="1031" y="478">Great Wolf Lodge</text>
            <text class="place park-name" x="978" y="699">Kings Island</text>
          </g>

          <g transform="translate(451 462)" filter="url(#drop)">
            <circle r="28" fill="#eeede6" /><circle r="24" fill="url(#golfFill)" />
            <path d="M-4 -17 L0 -15 Q4 -17 11 -12 Q8 -8 6 -6 Q2 -8 -1 -6 V6 H-4 Z" fill="#fff" />
            <ellipse cy="8" rx="14" ry="5" fill="#fff" /><ellipse cx="-2" cy="7" rx="5" ry="2" fill="none" stroke="#1c9a3c" />
          </g>
          <g transform="translate(997 465)" filter="url(#drop)">
            <circle r="28" fill="#f4f0ea" /><circle r="24" fill="url(#hotelFill)" />
            <path d="M-14 -8 V7 M-14 3 H14 M14 0 V7" stroke="#fff" stroke-width="3" /><path d="M-11 -1 V-3 Q-7 -6 -3 -3 V-4 H12 Q15 -4 15 -1 Z" fill="#fff" />
          </g>
          <g transform="translate(946 685)" filter="url(#drop)">
            <circle r="28" fill="#f1eee4" /><circle r="24" fill="url(#parkFill)" />
            <g fill="none" stroke="#fff"><circle cy="-2" r="12" stroke-width="2" /><path d="M0 -14 V10 M-12 -2 H12 M-8 -10 L8 6 M8 -10 L-8 6" /><path d="M0 0 L-5 14 M0 0 L5 14 M-10 15 H10" stroke-width="2" /></g>
            <g fill="#fff"><circle cy="-14" r="2" /><circle cx="13" cy="-2" r="2" /><circle cx="-13" cy="-2" r="2" /><circle cx="9" cy="-11" r="2" /><circle cx="-9" cy="-11" r="2" /><circle cx="9" cy="7" r="2" /><circle cx="-9" cy="7" r="2" /></g>
          </g>
          <g transform="translate(634 430)" filter="url(#drop)">
            <path d="M0 -46 A46 46 0 0 1 24 39 C10 48 4 54 2 61 Q0 64 -2 61 C-4 54 -10 48 -24 39 A46 46 0 0 1 0 -46 Z" fill="url(#pinFill)" />
            <circle cy="-16" r="13" fill="#fff" /><path d="M-4 0 Q0 1 4 0 L2 28 Q0 31 -2 28 Z" fill="#fff" />
          </g>
        </svg>
        <button class="directions" type="button">Get Directions</button>
        <div class="credit">
          <svg class="apple" viewBox="0 0 34 42" aria-hidden="true"><path d="M23 0c1 5-3 9-7 9-1-4 3-8 7-9zM31 14c-6 4-5 12 2 15-3 7-6 11-9 11-4 0-4-2-7-2s-4 2-7 2C5 40 0 32 0 24c0-9 6-13 10-13 3 0 5 2 7 2s4-2 8-2c2 0 5 1 6 3z" /></svg>
          <span class="brand">Maps</span>
          <a class="legal" href="#">Legal</a>
        </div>
      </section>

      <section class="card next" aria-hidden="true"></section>
    </main>

    <footer class="bottom">
      <nav class="nav" aria-label="Main">
        <a v-for="item in navItems" :key="item" class="nav-item" href="#">
          <svg viewBox="0 0 76 76" aria-hidden="true">
            <path v-if="item === 'Today'" d="M38 16 C44 6 54 6 60 11 C73 21 72 42 40 67 Q38 69 36 67 C4 42 3 21 16 11 C22 6 32 6 38 16 Z" />
            <g v-else-if="item === 'Scores'">
              <path d="M33 3 A35 35 0 0 0 3 34 C24 31 43 46 43 73 A35 35 0 0 0 73 43 C49 44 32 30 33 3 Z" />
              <path d="M38 3 A35 35 0 0 1 73 38 C52 39 37 26 38 3 Z M3 39 C22 38 38 51 38 73 A35 35 0 0 1 3 39 Z" />
            </g>
            <g v-else-if="item === 'Schedule'">
              <path d="M3 20 V17 Q3 8 14 8 H15 V5 a3 3 0 0 1 5 0 V8 H55 V5 a3 3 0 0 1 5 0 V8 Q73 8 73 17 V20 Z" />
              <path d="M3 26 H73 V62 Q73 73 63 73 H13 Q3 73 3 62 Z" />
              <g class="holes"><circle cx="44" cy="34" r="4" /><circle cx="57" cy="34" r="4" /><circle cx="19" cy="47" r="4" /><circle cx="32" cy="47" r="4" /><circle cx="44" cy="47" r="4" /><circle cx="57" cy="47" r="4" /><circle cx="19" cy="59" r="4" /><circle cx="32" cy="59" r="4" /><circle cx="44" cy="59" r="4" /></g>
            </g>
            <g v-else-if="item === 'Tickets'">
              <path d="M46 1 Q48 -1 50 1 L57 9 C54 16 60 22 66 18 L75 27 Q76 29 75 30 L31 74 Q29 76 27 74 L19 66 C23 59 16 52 10 57 L2 49 Q0 47 2 45 Z" />
              <g class="holes"><circle cx="37" cy="19" r="3" /><circle cx="43" cy="26" r="3" /><circle cx="50" cy="33" r="3" /><circle cx="57" cy="40" r="3" /></g>
            </g>
            <g v-else-if="item === 'Onsite'">
              <path d="M24 4 V61 L11 70 Q3 73 3 65 V20 Q3 17 6 15 Z" /><path d="M29 4 L46 15 V71 L29 60 Z" /><path d="M51 14 L64 6 Q73 2 73 11 V55 Q73 58 70 60 L51 71 Z" />
            </g>
            <g v-else><circle cx="14" cy="38" r="8" /><circle cx="38" cy="38" r="8" /><circle cx="63" cy="38" r="8" /></g>
          </svg>
          <span>{{ item }}</span>
        </a>
      </nav>
      <div class="home"></div>
    </footer>
  </div>
</template>

<style>
body { margin: 0; background: #e8ebf5; }
</style>

<style scoped>
* { box-sizing: border-box; }
.screen { height: 100vh; display: flex; flex-direction: column; overflow: hidden; background: #e8ebf5; color: #090e1d; font-family: Inter, "Open Sans", sans-serif; }
button { font: inherit; border: 0; padding: 0; background: none; cursor: pointer; }
a { color: inherit; text-decoration: none; }

.status { flex: none; display: flex; padding-top: 45px; height: 204px; }
.status-side { flex: 1; display: flex; justify-content: center; height: 122px; align-items: center; }
.clock { font-size: 56px; font-weight: 600; line-height: 64px; color: #000; padding-left: 32px; }
.island { width: 413px; height: 122px; border-radius: 61px; background: #000; }
.signals { width: 260px; height: 48px; margin-right: 30px; }

.topbar { flex: none; display: flex; align-items: center; height: 144px; padding: 0 26px; color: #5577ae; }
.tabs { flex: 1; display: flex; gap: 40px; height: 100%; }
.tab { color: inherit; font-size: 47px; font-weight: 600; line-height: 56px; padding: 12px 0; border-bottom: 10px solid transparent; }
.tab.active { border-color: #5577ae; }
.icon-button { color: inherit; display: block; }
.icon-button svg { display: block; width: 100%; }
.star { width: 80px; margin-right: 62px; }
.avatar { width: 108px; }

.content { flex: 1; min-height: 0; overflow: hidden; padding: 39px 26px 0; display: flex; flex-direction: column; }
.guides { list-style: none; margin: 0; padding: 0; display: flex; flex-direction: column; gap: 13px; }
.card { display: flex; align-items: center; min-height: 263px; padding: 0 70px 0 53px; border-radius: 32px; background: #fff; box-shadow: 0 6px 26px rgba(50, 55, 85, .12); }
.guide-icon { flex: none; width: 158px; height: 158px; border-radius: 50%; background: #e9eef5; fill: none; stroke: #5577ae; stroke-width: 5; stroke-linecap: round; stroke-linejoin: round; }
.solid { fill: #5577ae; stroke: none; }
.card-text { flex: 1; display: flex; flex-direction: column; gap: 24px; padding: 12px 0 0 39px; }
.card-title { font-size: 53px; font-weight: 400; line-height: 66px; }
.card-sub { font-size: 40px; font-weight: 400; line-height: 50px; color: #646a80; }
.chevron { flex: none; width: 28px; height: 46px; fill: none; stroke: #646a80; stroke-width: 6; stroke-linecap: round; stroke-linejoin: round; }

.map { flex: none; position: relative; aspect-ratio: 1268 / 985; margin-top: 65px; border-radius: 32px; overflow: hidden; display: flex; flex-direction: column; justify-content: flex-end; }
.map-art { position: absolute; inset: 0; width: 100%; height: 100%; }
.green { fill: #bde599; }
.cream { fill: #f6f2e6; }
.peach { fill: #f3ead6; }
.sand { fill: #fbeccb; }
.forest { fill: #b2de93; }
.olive { fill: #bce097; }
.golf { fill: #afda82; }
.dark { fill: #a0d272; }
.bright { fill: #a8e089; }
.yellow { fill: #dfeab9; }
.water { fill: #8adaf5; }
.stream { fill: none; stroke: #8adaf5; stroke-width: 8; }
.road-casing, .ramp-casing, .road, .ramp { fill: none; stroke-linejoin: round; stroke-linecap: round; }
.road-casing { stroke: #dadddd; stroke-width: 27; }
.ramp-casing { stroke: #b5b7b9; stroke-width: 24; }
.road { stroke: #fff; stroke-width: 16; }
.ramp { stroke: #d3d6d4; stroke-width: 16; }
.route { font-size: 34px; font-weight: 700; fill: #fff; }
.place { font-size: 34px; font-weight: 600; paint-order: stroke; stroke: #f2f2ec; stroke-width: 8px; stroke-linejoin: round; }
.golf-name { fill: #218141; }
.hotel-name { fill: #6749b5; }
.park-name { fill: #b93a82; }
.directions { position: relative; height: 144px; margin: 0 53px; padding-top: 4px; border-radius: 32px; background: #5577ae; color: #fff; font-size: 54px; font-weight: 600; }
.credit { position: relative; display: flex; align-items: center; height: 105px; padding-left: 35px; color: rgba(0, 0, 0, .6); }
.apple { width: 34px; height: 42px; fill: currentColor; margin-bottom: 6px; }
.brand { font-size: 49px; line-height: 60px; font-weight: 500; margin: 0 29px 0 2px; }
.legal { font-size: 29px; line-height: 60px; font-weight: 600; text-decoration: underline; text-underline-offset: 5px; color: rgba(0, 0, 0, .5); padding-top: 6px; }
.next { flex: none; margin-top: 79px; }

.bottom { flex: none; position: relative; display: flex; flex-direction: column; align-items: center; justify-content: space-between; height: 238px; padding: 26px 0 25px; border-top: 2px solid #dadbdf; background: radial-gradient(ellipse 34% 65% at 50% 38%, #76809d, rgba(118, 128, 157, 0)), linear-gradient(#8690ad, #7c88a9); }
.nav { display: flex; width: 100%; }
.nav-item { flex: 1; display: flex; flex-direction: column; align-items: center; gap: 15px; color: #e8ebf5; font-size: 33px; line-height: 40px; font-weight: 600; }
.nav-item svg { width: 76px; height: 76px; fill: currentColor; }
.holes { fill: #78829f; }
.home { width: 472px; height: 17px; border-radius: 9px; background: linear-gradient(#3d414c, #4d5262); }
</style>
